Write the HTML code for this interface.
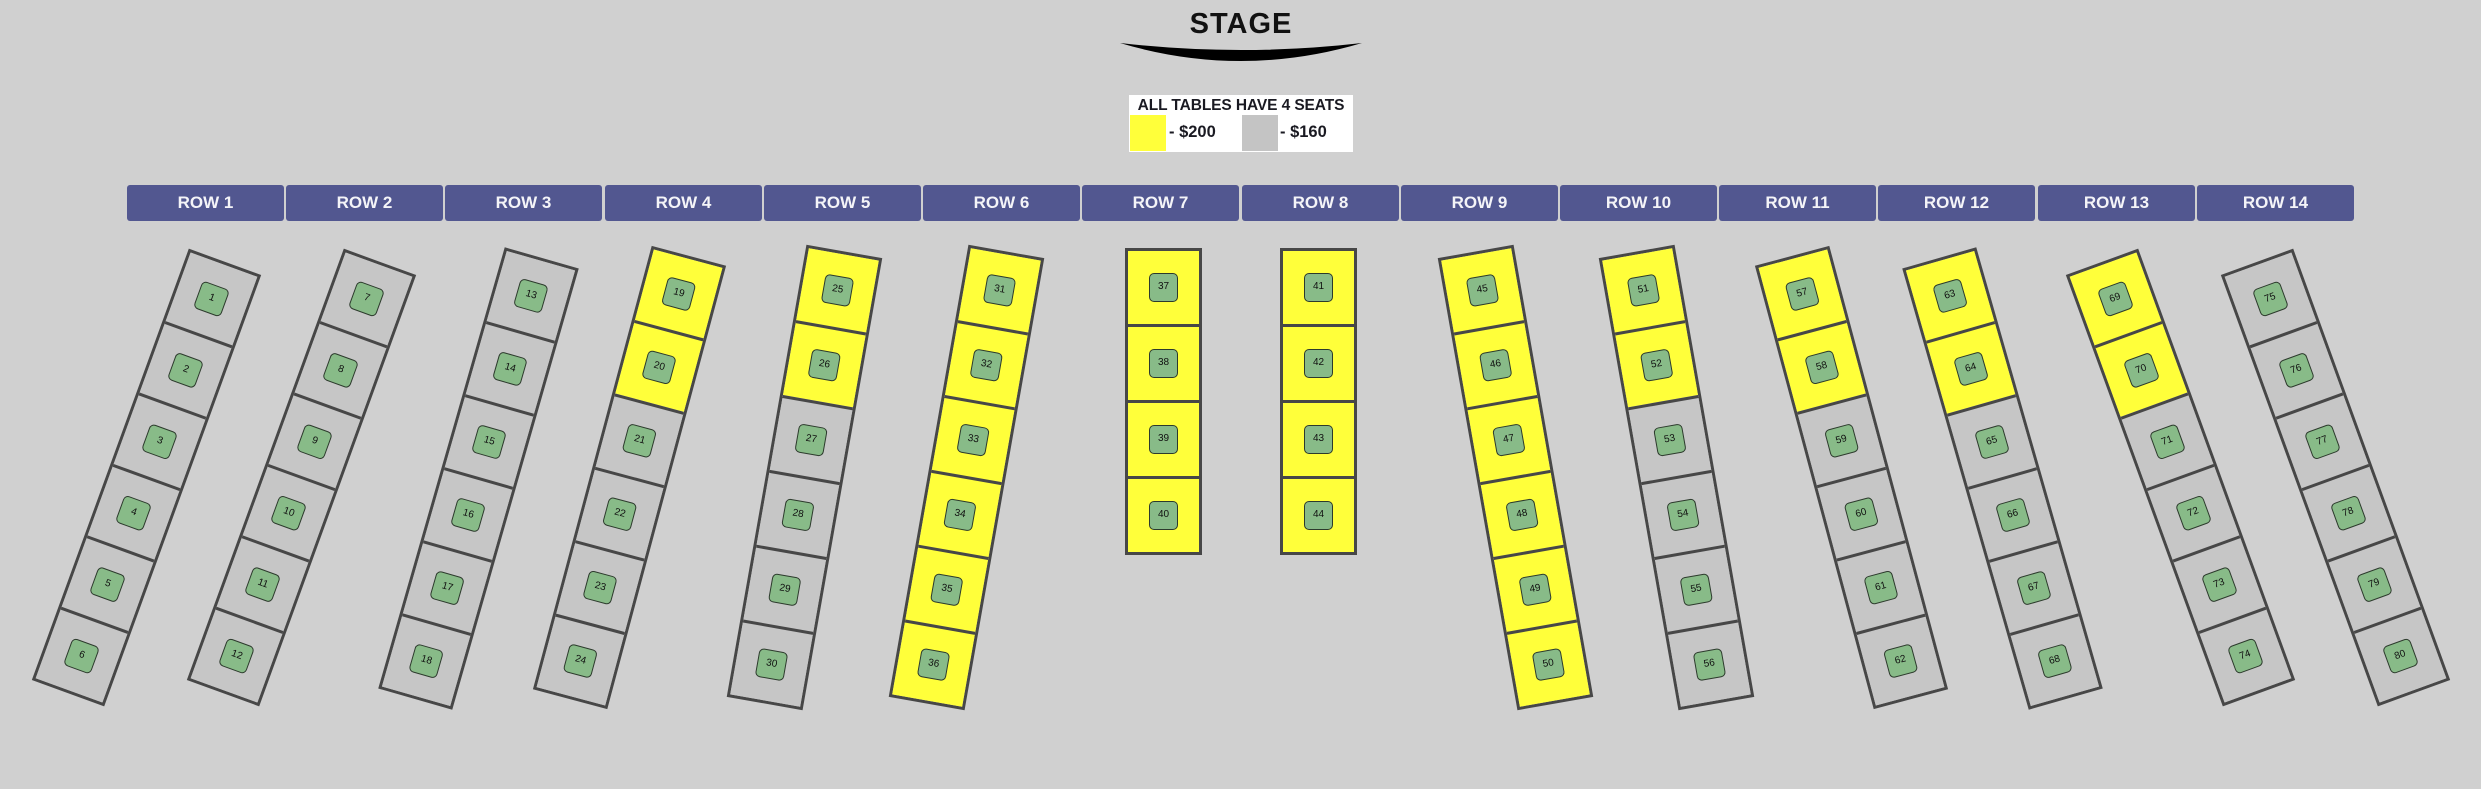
<!DOCTYPE html>
<html><head><meta charset="utf-8">
<style>
*{margin:0;padding:0;box-sizing:border-box}
body{width:2481px;height:789px;background:#d0d0d0;position:relative;overflow:hidden;font-family:"Liberation Sans",sans-serif}
.stage{position:absolute;left:1141px;top:8px;width:200px;text-align:center;font-weight:bold;font-size:29px;color:#111;letter-spacing:1px}
.legend{position:absolute;left:1129px;top:95px;width:224px;height:57px;background:#fff}
.legend .t{position:absolute;left:0;top:2px;width:224px;text-align:center;font-weight:bold;font-size:15.5px;color:#1a1a22;letter-spacing:-0.1px}
.sq{position:absolute;top:20px;width:36px;height:36px}
.lt{position:absolute;top:28px;font-weight:bold;font-size:16.5px;color:#1a1a22}
.hdr{position:absolute;top:185px;width:157px;height:36px;background:#525790;border-radius:3px;color:#f4f4f8;font-weight:bold;font-size:17px;text-align:center;line-height:36px}
.col{position:absolute;width:77px;border:3px solid #474747;transform-origin:50% 50%}
.cell{height:76px;position:relative;border-top:3px solid #474747}
.cell:first-child{border-top:none;height:73px}
.g{background:#c6c6c6}.y{background:#ffff3a}
.seat{position:absolute;left:50%;top:50%;width:29px;height:29px;margin:-14.5px 0 0 -14.5px;background:#88bb88;border:1.5px solid #2c3a2c;border-radius:5px;font-size:10px;line-height:26px;text-align:center;color:#111}
</style></head><body>
<div class="stage">STAGE</div>
<svg style="position:absolute;left:1115px;top:40px" width="252" height="26"><path d="M5 3 Q126 17 247 3 Q126 39 5 3Z" fill="#000"/></svg>
<div class="legend">
<div class="t">ALL TABLES HAVE 4 SEATS</div>
<div class="sq" style="left:1px;background:#ffff3a"></div><div class="lt" style="left:40px">- $200</div>
<div class="sq" style="left:113px;background:#c4c4c4"></div><div class="lt" style="left:151px">- $160</div>
</div>
<div class="hdr" style="left:127px">ROW 1</div>
<div class="hdr" style="left:286px">ROW 2</div>
<div class="hdr" style="left:445px">ROW 3</div>
<div class="hdr" style="left:605px">ROW 4</div>
<div class="hdr" style="left:764px">ROW 5</div>
<div class="hdr" style="left:923px">ROW 6</div>
<div class="hdr" style="left:1082px">ROW 7</div>
<div class="hdr" style="left:1242px">ROW 8</div>
<div class="hdr" style="left:1401px">ROW 9</div>
<div class="hdr" style="left:1560px">ROW 10</div>
<div class="hdr" style="left:1719px">ROW 11</div>
<div class="hdr" style="left:1878px">ROW 12</div>
<div class="hdr" style="left:2038px">ROW 13</div>
<div class="hdr" style="left:2197px">ROW 14</div>

<div class="col" style="left:107.5px;top:248px;transform:rotate(20deg)"><div class="cell g"><div class="seat">1</div></div><div class="cell g"><div class="seat">2</div></div><div class="cell g"><div class="seat">3</div></div><div class="cell g"><div class="seat">4</div></div><div class="cell g"><div class="seat">5</div></div><div class="cell g"><div class="seat">6</div></div></div>
<div class="col" style="left:262.5px;top:248px;transform:rotate(20deg)"><div class="cell g"><div class="seat">7</div></div><div class="cell g"><div class="seat">8</div></div><div class="cell g"><div class="seat">9</div></div><div class="cell g"><div class="seat">10</div></div><div class="cell g"><div class="seat">11</div></div><div class="cell g"><div class="seat">12</div></div></div>
<div class="col" style="left:440px;top:248.5px;transform:rotate(16deg)"><div class="cell g"><div class="seat">13</div></div><div class="cell g"><div class="seat">14</div></div><div class="cell g"><div class="seat">15</div></div><div class="cell g"><div class="seat">16</div></div><div class="cell g"><div class="seat">17</div></div><div class="cell g"><div class="seat">18</div></div></div>
<div class="col" style="left:591px;top:247.5px;transform:rotate(15deg)"><div class="cell y"><div class="seat">19</div></div><div class="cell y"><div class="seat">20</div></div><div class="cell g"><div class="seat">21</div></div><div class="cell g"><div class="seat">22</div></div><div class="cell g"><div class="seat">23</div></div><div class="cell g"><div class="seat">24</div></div></div>
<div class="col" style="left:766px;top:248px;transform:rotate(10deg)"><div class="cell y"><div class="seat">25</div></div><div class="cell y"><div class="seat">26</div></div><div class="cell g"><div class="seat">27</div></div><div class="cell g"><div class="seat">28</div></div><div class="cell g"><div class="seat">29</div></div><div class="cell g"><div class="seat">30</div></div></div>
<div class="col" style="left:927.5px;top:247.5px;transform:rotate(10deg)"><div class="cell y"><div class="seat">31</div></div><div class="cell y"><div class="seat">32</div></div><div class="cell y"><div class="seat">33</div></div><div class="cell y"><div class="seat">34</div></div><div class="cell y"><div class="seat">35</div></div><div class="cell y"><div class="seat">36</div></div></div>
<div class="col" style="left:1125px;top:248px"><div class="cell y"><div class="seat">37</div></div><div class="cell y"><div class="seat">38</div></div><div class="cell y"><div class="seat">39</div></div><div class="cell y"><div class="seat">40</div></div></div>
<div class="col" style="left:1280px;top:248px"><div class="cell y"><div class="seat">41</div></div><div class="cell y"><div class="seat">42</div></div><div class="cell y"><div class="seat">43</div></div><div class="cell y"><div class="seat">44</div></div></div>
<div class="col" style="left:1476.5px;top:247.5px;transform:rotate(-10deg)"><div class="cell y"><div class="seat">45</div></div><div class="cell y"><div class="seat">46</div></div><div class="cell y"><div class="seat">47</div></div><div class="cell y"><div class="seat">48</div></div><div class="cell y"><div class="seat">49</div></div><div class="cell y"><div class="seat">50</div></div></div>
<div class="col" style="left:1638px;top:248px;transform:rotate(-10deg)"><div class="cell y"><div class="seat">51</div></div><div class="cell y"><div class="seat">52</div></div><div class="cell g"><div class="seat">53</div></div><div class="cell g"><div class="seat">54</div></div><div class="cell g"><div class="seat">55</div></div><div class="cell g"><div class="seat">56</div></div></div>
<div class="col" style="left:1813px;top:247.5px;transform:rotate(-15deg)"><div class="cell y"><div class="seat">57</div></div><div class="cell y"><div class="seat">58</div></div><div class="cell g"><div class="seat">59</div></div><div class="cell g"><div class="seat">60</div></div><div class="cell g"><div class="seat">61</div></div><div class="cell g"><div class="seat">62</div></div></div>
<div class="col" style="left:1964px;top:248.5px;transform:rotate(-16deg)"><div class="cell y"><div class="seat">63</div></div><div class="cell y"><div class="seat">64</div></div><div class="cell g"><div class="seat">65</div></div><div class="cell g"><div class="seat">66</div></div><div class="cell g"><div class="seat">67</div></div><div class="cell g"><div class="seat">68</div></div></div>
<div class="col" style="left:2141.5px;top:248px;transform:rotate(-20deg)"><div class="cell y"><div class="seat">69</div></div><div class="cell y"><div class="seat">70</div></div><div class="cell g"><div class="seat">71</div></div><div class="cell g"><div class="seat">72</div></div><div class="cell g"><div class="seat">73</div></div><div class="cell g"><div class="seat">74</div></div></div>
<div class="col" style="left:2296.5px;top:248px;transform:rotate(-20deg)"><div class="cell g"><div class="seat">75</div></div><div class="cell g"><div class="seat">76</div></div><div class="cell g"><div class="seat">77</div></div><div class="cell g"><div class="seat">78</div></div><div class="cell g"><div class="seat">79</div></div><div class="cell g"><div class="seat">80</div></div></div>
</body></html>
